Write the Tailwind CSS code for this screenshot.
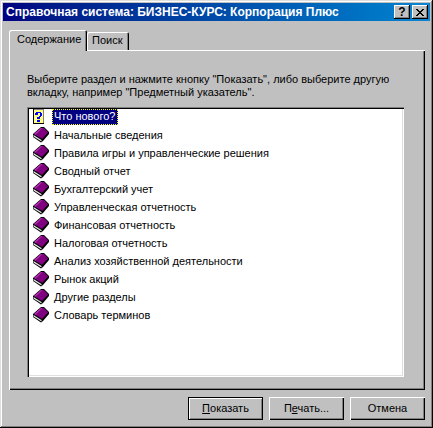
<!DOCTYPE html>
<html><head><meta charset="utf-8"><script src="https://cdn.jsdelivr.net/npm/@tailwindcss/browser@4"></script></head>
<body class="m-0 w-[433px] h-[428px] overflow-hidden bg-[#c0c0c0] font-['Liberation_Sans',sans-serif] text-[11px] leading-[13px] text-black">
<svg width="0" height="0" class="absolute"><defs><symbol id="book" viewBox="0 0 18 16"><path fill="#000" d="M9 0h3l5 5v2l-6 7-2 1.500-8-5.500V7z"/><path fill="#800080" d="M9 1h3l4 4.500-6 6.500-8-5z"/><path fill="#b030b0" d="M9 1h1.500L3.500 7.800 2 7z"/><path fill="#e8e8e8" d="M1.500 8l8 5v1.500l-8-5z"/></symbol></defs></svg>
<div class="w-[433px] h-[428px] p-[3px] bg-[#c0c0c0] shadow-[inset_-1px_-1px_0_#000,inset_1px_1px_0_#dfdfdf,inset_-2px_-2px_0_#808080,inset_2px_2px_0_#fff] flex flex-col">
  <div class="h-[18px] shrink-0 bg-gradient-to-r from-[#000080] to-[#1084d0] flex items-center pl-[3px] pr-[2px]">
    <span class="flex-1 font-bold text-white text-[12px]">Справочная система: БИЗНЕС-КУРС: Корпорация Плюс</span>
    <span class="w-4 h-[14px] bg-[#c0c0c0] shadow-[inset_-1px_-1px_0_#000,inset_1px_1px_0_#fff,inset_-2px_-2px_0_#808080] font-bold text-[12px] leading-[14px] text-center">?</span>
    <span class="w-4 h-[14px] ml-[2px] bg-[#c0c0c0] shadow-[inset_-1px_-1px_0_#000,inset_1px_1px_0_#fff,inset_-2px_-2px_0_#808080] flex items-center justify-center">
      <svg width="8" height="7" viewBox="0 0 8 7" shape-rendering="crispEdges"><path d="M0 0h2v1h-2zM6 0h2v1h-2zM1 1h2v1h-2zM5 1h2v1h-2zM2 2h4v1h-4zM3 3h2v1h-2zM2 4h4v1h-4zM1 5h2v1h-2zM5 5h2v1h-2zM0 6h2v1h-2zM6 6h2v1h-2z"/></svg>
    </span>
  </div>
  <div class="flex-1 flex flex-col pt-[8px] pl-[6px] pr-[5px]">
    <div class="flex items-end h-[21px] shrink-0 relative z-10">
      <div class="w-[78px] h-[21px] pl-[8px] pt-[3px] -mb-[1px] bg-[#c0c0c0] rounded-t-[2px] shadow-[inset_1px_1px_0_#fff,inset_-1px_0_0_#000,inset_-2px_0_0_#808080]">Содержание</div>
      <div class="w-[42px] h-[18px] pl-[5px] pt-[2px] bg-[#c0c0c0] rounded-t-[2px] shadow-[inset_1px_1px_0_#fff,inset_-1px_0_0_#000,inset_-2px_0_0_#808080]">Поиск</div>
    </div>
    <div class="h-[340px] shrink-0 bg-[#c0c0c0] shadow-[inset_1px_1px_0_#fff,inset_-1px_-1px_0_#000,inset_-2px_-2px_0_#808080] pt-[23px] pl-[18px] pr-[21px]">
      <p class="leading-[13px] h-[34px] m-0">Выберите раздел и нажмите кнопку "Показать", либо выберите другую<br>вкладку, например "Предметный указатель".</p>
      <div class="w-[377px] h-[270px] bg-white shadow-[inset_1px_1px_0_#808080,inset_2px_2px_0_#000,inset_-1px_-1px_0_#fff,inset_-2px_-2px_0_#dfdfdf] pt-[1px] pl-[5px]">
        <ul class="m-0 p-0 list-none">
          <li class="h-[18px] flex items-center gap-[4px]">
            <svg width="18" height="16" viewBox="0 0 18 16" shape-rendering="crispEdges"><path fill="#ffff80" d="M2 1h9v13h-9z"/><path fill="#808080" d="M1 0h10v1h-10zM11 0h1v15h-1z"/><path fill="#000" d="M1 0h1v15h-1zM1 14h11v1h-11z"/><path fill="#0000ff" d="M4 3h5v1h-5zM3 4h3v2h-3zM8 4h2v3h-2zM7 7h2v1h-2zM5 8h3v2h-3zM5 11h3v2h-3z"/></svg>
            <span class="-ml-[2px] bg-[#000080] text-white h-[16px] pl-[2px] pr-[3px] leading-[15px] outline-1 outline-dotted outline-[#ffff00] -outline-offset-1">Что нового?</span>
          </li>
          <li class="h-[18px] flex items-center gap-[4px]"><svg width="18" height="16"><use href="#book"/></svg><span>Начальные сведения</span></li>
          <li class="h-[18px] flex items-center gap-[4px]"><svg width="18" height="16"><use href="#book"/></svg><span>Правила игры и управленческие решения</span></li>
          <li class="h-[18px] flex items-center gap-[4px]"><svg width="18" height="16"><use href="#book"/></svg><span>Сводный отчет</span></li>
          <li class="h-[18px] flex items-center gap-[4px]"><svg width="18" height="16"><use href="#book"/></svg><span>Бухгалтерский учет</span></li>
          <li class="h-[18px] flex items-center gap-[4px]"><svg width="18" height="16"><use href="#book"/></svg><span>Управленческая отчетность</span></li>
          <li class="h-[18px] flex items-center gap-[4px]"><svg width="18" height="16"><use href="#book"/></svg><span>Финансовая отчетность</span></li>
          <li class="h-[18px] flex items-center gap-[4px]"><svg width="18" height="16"><use href="#book"/></svg><span>Налоговая отчетность</span></li>
          <li class="h-[18px] flex items-center gap-[4px]"><svg width="18" height="16"><use href="#book"/></svg><span>Анализ хозяйственной деятельности</span></li>
          <li class="h-[18px] flex items-center gap-[4px]"><svg width="18" height="16"><use href="#book"/></svg><span>Рынок акций</span></li>
          <li class="h-[18px] flex items-center gap-[4px]"><svg width="18" height="16"><use href="#book"/></svg><span>Другие разделы</span></li>
          <li class="h-[18px] flex items-center gap-[4px]"><svg width="18" height="16"><use href="#book"/></svg><span>Словарь терминов</span></li>
        </ul>
      </div>
    </div>
    <div class="flex justify-end gap-[6px] pt-[7px]">
      <button class="w-[75px] h-[23px] bg-[#c0c0c0] shadow-[inset_0_0_0_1px_#000,inset_1px_1px_0_1px_#fff,inset_-1px_-1px_0_1px_#808080]"><u>П</u>оказать</button>
      <button class="w-[75px] h-[23px] bg-[#c0c0c0] shadow-[inset_1px_1px_0_#fff,inset_-1px_-1px_0_#000,inset_-2px_-2px_0_#808080]">П<u>е</u>чать...</button>
      <button class="w-[75px] h-[23px] bg-[#c0c0c0] shadow-[inset_1px_1px_0_#fff,inset_-1px_-1px_0_#000,inset_-2px_-2px_0_#808080]">Отмена</button>
    </div>
  </div>
</div>
</body></html>
